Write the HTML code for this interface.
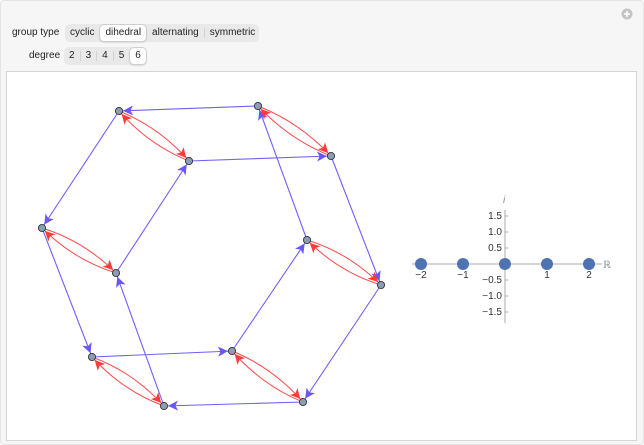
<!DOCTYPE html>
<html><head><meta charset="utf-8"><style>
body{margin:0;width:644px;height:445px;background:#fff;font-family:"Liberation Sans",sans-serif;overflow:hidden}
.card{position:absolute;left:0;top:0;width:642px;height:443px;background:#f6f6f6;border:1px solid #e4e4e4;border-radius:4px}
.lbl{position:absolute;font-size:10px;color:#222}
.seg{position:absolute;height:18px;background:#e9e9e9;border-radius:5px;display:flex;align-items:center;font-size:10px;color:#222}
.seg span{padding:0 5px;border-left:1px solid #d3d3d3;line-height:10px}
.seg span:first-child{border-left:none}
.seg span.on{background:#fff;border:1px solid #cfcfcf;border-radius:5px;line-height:16px;box-shadow:0 1px 1px rgba(0,0,0,.1)}
.seg span.on+span{border-left:none}
.panel{position:absolute;left:6px;top:71px;width:629px;height:368px;background:#fff;border:1px solid #d4d4d4}
</style></head><body>
<div class="card"></div>
<div class="lbl" style="left:12px;top:27px">group type</div>
<div class="seg" style="left:65px;top:24px;width:194px"><span>cyclic</span><span class="on">dihedral</span><span>alternating</span><span>symmetric</span></div>
<div class="lbl" style="left:29px;top:50px">degree</div>
<div class="seg" style="left:64px;top:47px;width:80px"><span>2</span><span>3</span><span>4</span><span>5</span><span class="on">6</span></div>
<svg style="position:absolute;left:621px;top:8px" width="12" height="12"><circle cx="6" cy="6" r="5.5" fill="#c4c4c4"/><path d="M6 3v6M3 6h6" stroke="#fff" stroke-width="1.6"/></svg>
<div class="panel"></div>
<svg style="position:absolute;left:0;top:0" width="644" height="445">
<defs>
<marker id="b" markerUnits="userSpaceOnUse" markerWidth="20" markerHeight="20" refX="14" refY="5" orient="auto"><path d="M0 0L10 5L0 10L2.5 5z" fill="#6a55ff"/></marker>
<marker id="r" markerUnits="userSpaceOnUse" markerWidth="20" markerHeight="20" refX="14" refY="5" orient="auto"><path d="M0 0L10 5L0 10L2.5 5z" fill="#ff3b3b"/></marker>
</defs>
<g stroke="#7060ff" stroke-width="1.1" fill="none" marker-end="url(#b)">
<path d="M258 106L119 111"/><path d="M119 111L42 228"/><path d="M116 273L189 161"/><path d="M189 161L331 156"/>
<path d="M331 156L381 285"/><path d="M381 285L303 402"/><path d="M307 240L258 106"/><path d="M232 351L307 240"/>
<path d="M303 402L164 406"/><path d="M164 406L116 273"/><path d="M42 228L92 357"/><path d="M92 357L232 351"/>
</g>
<g stroke="#ff4a4a" stroke-width="1" fill="none" marker-end="url(#r)">
<path d="M119 111Q159 127 189 161"/><path d="M189 161Q149 145 119 111"/>
<path d="M42 228Q84 241 116 273"/><path d="M116 273Q74 260 42 228"/>
<path d="M307 240Q349 253 381 285"/><path d="M381 285Q339 272 307 240"/>
<path d="M92 357Q133 372 164 406"/><path d="M164 406Q123 391 92 357"/>
<path d="M232 351Q272 367 303 402"/><path d="M303 402Q263 386 232 351"/>
<path d="M258 106Q299 122 331 156"/><path d="M331 156Q290 140 258 106"/>
</g>
<g fill="#8b9db5" stroke="#333" stroke-width="0.9">
<circle cx="119" cy="111" r="3.6"/><circle cx="258" cy="106" r="3.6"/><circle cx="189" cy="161" r="3.6"/><circle cx="331" cy="156" r="3.6"/>
<circle cx="42" cy="228" r="3.6"/><circle cx="116" cy="273" r="3.6"/><circle cx="307" cy="240" r="3.6"/><circle cx="381" cy="285" r="3.6"/>
<circle cx="92" cy="357" r="3.6"/><circle cx="232" cy="351" r="3.6"/><circle cx="164" cy="406" r="3.6"/><circle cx="303" cy="402" r="3.6"/>
</g>
<g stroke="#aaa" stroke-width="1">
<path d="M412 264H602"/><path d="M505 210V323"/>
<path d="M421 264v3M463 264v3M547 264v3M589 264v3M505 216h3M505 232h3M505 248h3M505 280h3M505 296h3M505 312h3"/>
</g>
<g fill="#4f72b0"><circle cx="421" cy="264" r="6"/><circle cx="463" cy="264" r="6"/><circle cx="505" cy="264" r="6"/><circle cx="547" cy="264" r="6"/><circle cx="589" cy="264" r="6"/></g>
<g font-size="10" fill="#333" font-family="Liberation Sans,sans-serif">
<text x="421" y="278" text-anchor="middle">−2</text><text x="463" y="278" text-anchor="middle">−1</text>
<text x="547" y="278" text-anchor="middle">1</text><text x="589" y="278" text-anchor="middle">2</text>
<g text-anchor="end"><text x="502" y="219">1.5</text><text x="502" y="235">1.0</text><text x="502" y="251">0.5</text>
<text x="502" y="283">−0.5</text><text x="502" y="299">−1.0</text><text x="502" y="315">−1.5</text></g>
<text x="603" y="268" fill="#888">ℝ</text><text x="503" y="203" fill="#888" font-style="italic">i</text>
</g>
</svg>
</body></html>
